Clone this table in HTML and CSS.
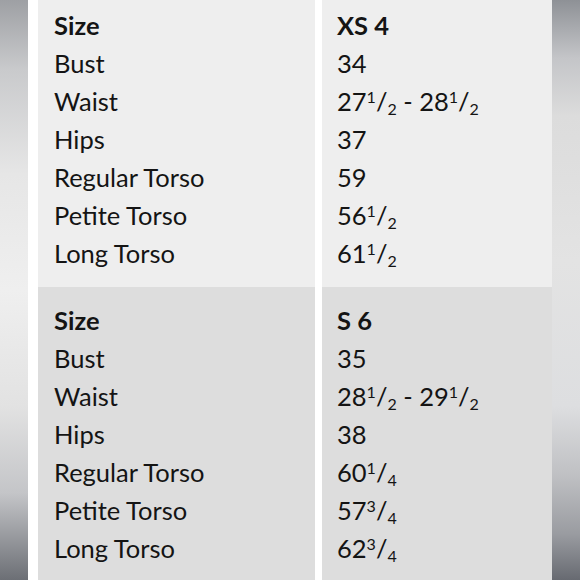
FILE: index.html
```html
<!DOCTYPE html>
<html>
<head>
<meta charset="utf-8">
<link rel="stylesheet" href="styles.css">
</head>
<body>
<div class="page">
  <div class="edge edge-left"></div>
  <div class="chart">
    <div class="cell top">
      <div class="line head">Size</div>
      <div class="line">Bust</div>
      <div class="line">Waist</div>
      <div class="line">Hips</div>
      <div class="line">Regular Torso</div>
      <div class="line">Petite Torso</div>
      <div class="line">Long Torso</div>
    </div>
    <div class="cell top val">
      <div class="line head">XS 4</div>
      <div class="line">34</div>
      <div class="line">27<span class="num">1</span>/<span class="den">2</span> - 28<span class="num">1</span>/<span class="den">2</span></div>
      <div class="line">37</div>
      <div class="line">59</div>
      <div class="line">56<span class="num">1</span>/<span class="den">2</span></div>
      <div class="line">61<span class="num">1</span>/<span class="den">2</span></div>
    </div>
    <div class="cell bottom">
      <div class="line head">Size</div>
      <div class="line">Bust</div>
      <div class="line">Waist</div>
      <div class="line">Hips</div>
      <div class="line">Regular Torso</div>
      <div class="line">Petite Torso</div>
      <div class="line">Long Torso</div>
    </div>
    <div class="cell bottom val">
      <div class="line head">S 6</div>
      <div class="line">35</div>
      <div class="line">28<span class="num">1</span>/<span class="den">2</span> - 29<span class="num">1</span>/<span class="den">2</span></div>
      <div class="line">38</div>
      <div class="line">60<span class="num">1</span>/<span class="den">4</span></div>
      <div class="line">57<span class="num">3</span>/<span class="den">4</span></div>
      <div class="line">62<span class="num">3</span>/<span class="den">4</span></div>
    </div>
  </div>
  <div class="edge edge-right"></div>
</div>
</body>
</html>
```
FILE: styles.css
```css
html, body {
  margin: 0;
  padding: 0;
  background: #ffffff;
}
.page {
  width: 580px;
  height: 580px;
  display: flex;
  overflow: hidden;
  font-family: Lato, "Open Sans", sans-serif;
  color: #141414;
}
.edge {
  width: 28px;
  flex: none;
}
.edge-left {
  background: linear-gradient(to bottom, #9ea0a4 0%, #c9cacc 12%, #e6e6e6 30%, #efefef 50%, #e2e2e2 70%, #c4c5c8 85%, #6c6f75 100%);
}
.edge-right {
  background: linear-gradient(to bottom, #8e9196 0%, #c4c5c8 10%, #dcdcdc 20%, #e3e3e3 45%, #dddee0 70%, #bfc0c3 82%, #9a9ca1 92%, #676a71 100%);
}
.chart {
  flex: 1;
  padding-left: 10px;
  display: grid;
  grid-template-columns: 277px 1fr;
  grid-template-rows: 287px 1fr;
  column-gap: 7px;
  background: #ffffff;
}
.cell {
  padding-left: 16px;
}
.cell.val {
  padding-left: 15px;
}
.cell.top {
  background: #eeeeee;
  padding-top: 6px;
}
.cell.bottom {
  background: #dddddd;
  padding-top: 14px;
}
.line {
  font-size: 25.5px;
  line-height: 38px;
  height: 38px;
  white-space: nowrap;
}
.head {
  font-weight: 700;
}
.num {
  font-size: 16px;
  vertical-align: 8px;
  line-height: 0;
}
.den {
  font-size: 16px;
  vertical-align: -4px;
  line-height: 0;
}
```
